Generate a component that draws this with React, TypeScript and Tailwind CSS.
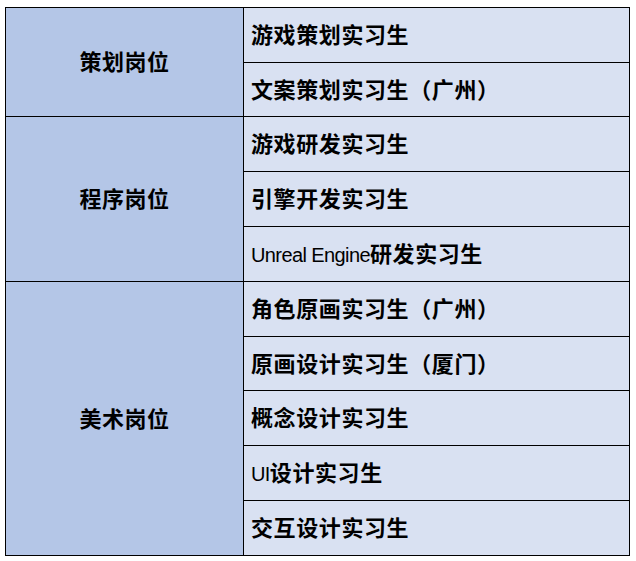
const GROUPS = [
  { title: "策划岗位", rows: ["游戏策划实习生", "文案策划实习生（广州）"], heights: ["h-[55px]", "h-[53px]"] },
  {
    title: "程序岗位",
    rows: ["游戏研发实习生", "引擎开发实习生", "Unreal Engine研发实习生"],
    heights: ["h-[55px]", "h-[55px]", "h-[54px]"],
  },
  {
    title: "美术岗位",
    rows: ["角色原画实习生（广州）", "原画设计实习生（厦门）", "概念设计实习生", "UI设计实习生", "交互设计实习生"],
    heights: ["h-[55px]", "h-[54px]", "h-[55px]", "h-[55px]", "h-[54px]"],
  },
];

// latin runs get a separate face like the original sheet
function Label({ text }: { text: string }) {
  const parts = text.split(/([A-Za-z ]+)/).filter(Boolean);
  return (
    <span>
      {parts.map((p, i) =>
        /^[A-Za-z ]+$/.test(p) ? (
          <span key={i} className="text-[20px] font-normal tracking-[-0.6px] font-['Liberation_Sans',sans-serif]">
            {p}
          </span>
        ) : (
          <span key={i}>{p}</span>
        )
      )}
    </span>
  );
}

export default function App() {
  return (
    <div className="w-[636px] h-[561px] bg-white pt-[7px] pl-[5px]">
      <div
        className="w-[625px] flex flex-col border border-black text-[22px] font-semibold text-black"
        style={{ fontFamily: '"Noto Sans CJK SC", "Noto Sans", sans-serif' }}
      >
        {GROUPS.map((group, gi) => (
          <div key={group.title} className={`flex ${gi < GROUPS.length - 1 ? "border-b border-black" : ""}`}>
            <div className="w-[238px] shrink-0 flex items-center justify-center pb-[3px] bg-[#b4c6e7] border-r border-black tracking-[0.5px]">
              {group.title}
            </div>
            <div className="flex-1 flex flex-col bg-[#d9e1f2]">
              {group.rows.map((row, ri) => (
                <div
                  key={row}
                  className={`${group.heights[ri]} flex items-center pl-[7px] pb-[3px] tracking-[0.6px] ${
                    ri < group.rows.length - 1 ? "border-b border-black" : ""
                  }`}
                >
                  <Label text={row} />
                </div>
              ))}
            </div>
          </div>
        ))}
      </div>
    </div>
  );
}
